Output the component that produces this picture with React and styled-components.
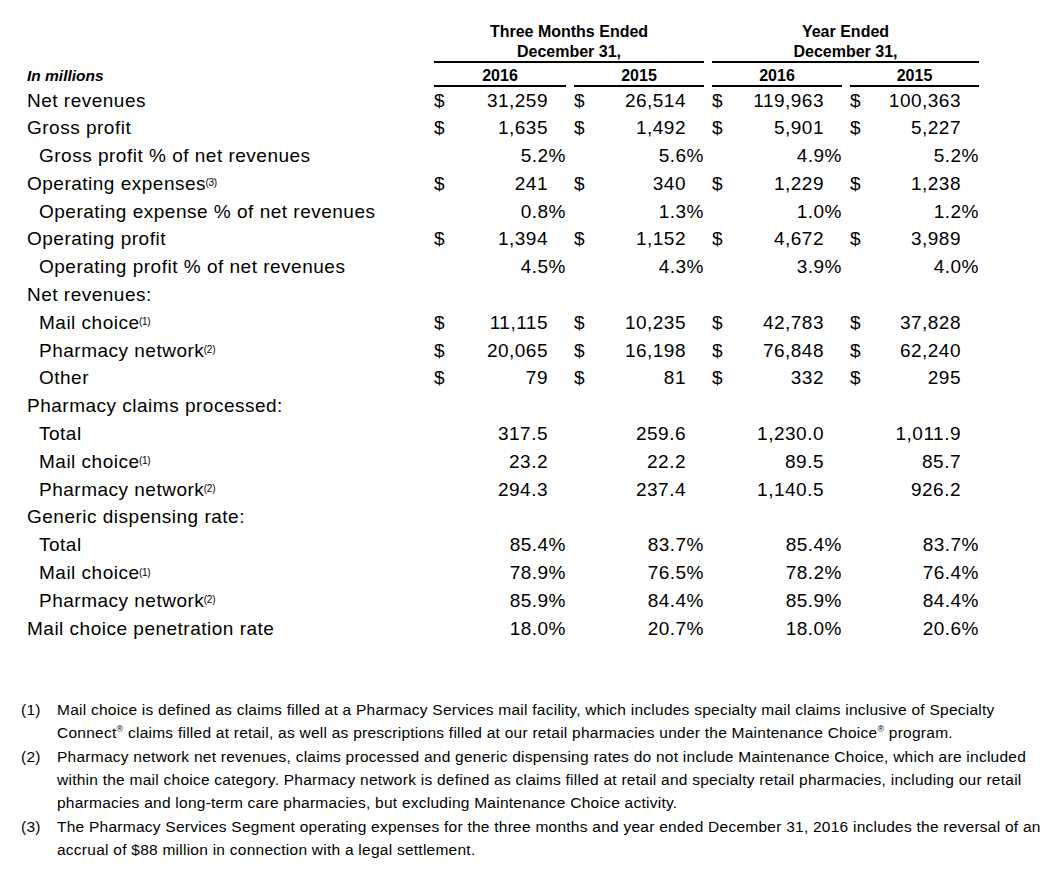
import React from 'react'
import styled, { createGlobalStyle } from 'styled-components'

const GlobalStyle = createGlobalStyle`
   body {
      margin: 0;
      background: #fff;
      color: #000;
      font-family: 'Liberation Sans', Arial, Helvetica, sans-serif;
   }
`

const rows = [
   { label: 'Net revenues', dollar: true, values: ['31,259', '26,514', '119,963', '100,363'] },
   { label: 'Gross profit', dollar: true, values: ['1,635', '1,492', '5,901', '5,227'] },
   { label: 'Gross profit % of net revenues', indent: true, pct: true, values: ['5.2%', '5.6%', '4.9%', '5.2%'] },
   { label: 'Operating expenses', note: '(3)', dollar: true, values: ['241', '340', '1,229', '1,238'] },
   { label: 'Operating expense % of net revenues', indent: true, pct: true, values: ['0.8%', '1.3%', '1.0%', '1.2%'] },
   { label: 'Operating profit', dollar: true, values: ['1,394', '1,152', '4,672', '3,989'] },
   { label: 'Operating profit % of net revenues', indent: true, pct: true, values: ['4.5%', '4.3%', '3.9%', '4.0%'] },
   { label: 'Net revenues:' },
   { label: 'Mail choice', note: '(1)', indent: true, dollar: true, values: ['11,115', '10,235', '42,783', '37,828'] },
   { label: 'Pharmacy network', note: '(2)', indent: true, dollar: true, values: ['20,065', '16,198', '76,848', '62,240'] },
   { label: 'Other', indent: true, dollar: true, values: ['79', '81', '332', '295'] },
   { label: 'Pharmacy claims processed:' },
   { label: 'Total', indent: true, values: ['317.5', '259.6', '1,230.0', '1,011.9'] },
   { label: 'Mail choice', note: '(1)', indent: true, values: ['23.2', '22.2', '89.5', '85.7'] },
   { label: 'Pharmacy network', note: '(2)', indent: true, values: ['294.3', '237.4', '1,140.5', '926.2'] },
   { label: 'Generic dispensing rate:' },
   { label: 'Total', indent: true, pct: true, values: ['85.4%', '83.7%', '85.4%', '83.7%'] },
   { label: 'Mail choice', note: '(1)', indent: true, pct: true, values: ['78.9%', '76.5%', '78.2%', '76.4%'] },
   { label: 'Pharmacy network', note: '(2)', indent: true, pct: true, values: ['85.9%', '84.4%', '85.9%', '84.4%'] },
   { label: 'Mail choice penetration rate', pct: true, values: ['18.0%', '20.7%', '18.0%', '20.6%'] },
]

const App = () => {
   return (
      <>
         <GlobalStyle />
         <Page>
            <Table>
               <GroupRow>
                  <span />
                  <GroupTitle>Three Months Ended<br />December 31,</GroupTitle>
                  <GroupTitle>Year Ended<br />December 31,</GroupTitle>
               </GroupRow>
               <YearRow>
                  <Caption>In millions</Caption>
                  {['2016', '2015', '2016', '2015'].map((year, index) => (
                     <YearCell key={index}>{year}</YearCell>
                  ))}
               </YearRow>
               {rows.map((row, index) => (
                  <DataRow key={index}>
                     <Label $indent={row.indent}>
                        {row.label}
                        {row.note && <Note>{row.note}</Note>}
                     </Label>
                     {row.values && row.values.map((value, i) => (
                        <Cell key={i}>
                           {row.dollar && <span>$</span>}
                           <Amount $pct={row.pct}>{value}</Amount>
                        </Cell>
                     ))}
                  </DataRow>
               ))}
            </Table>
            <Footnotes>
               <Footnote>
                  <Marker>(1)</Marker>
                  <FootText>
                     Mail choice is defined as claims filled at a Pharmacy Services mail facility, which includes specialty mail claims inclusive of Specialty<br />
                     Connect<Reg>®</Reg> claims filled at retail, as well as prescriptions filled at our retail pharmacies under the Maintenance Choice<Reg>®</Reg> program.
                  </FootText>
               </Footnote>
               <Footnote>
                  <Marker>(2)</Marker>
                  <FootText>
                     Pharmacy network net revenues, claims processed and generic dispensing rates do not include Maintenance Choice, which are included<br />
                     within the mail choice category. Pharmacy network is defined as claims filled at retail and specialty retail pharmacies, including our retail<br />
                     pharmacies and long-term care pharmacies, but excluding Maintenance Choice activity.
                  </FootText>
               </Footnote>
               <Footnote>
                  <Marker>(3)</Marker>
                  <FootText>
                     The Pharmacy Services Segment operating expenses for the three months and year ended December 31, 2016 includes the reversal of an<br />
                     accrual of $88 million in connection with a legal settlement.
                  </FootText>
               </Footnote>
            </Footnotes>
         </Page>
      </>
   )
}

const Page = styled.div`
   padding: 22px 0 20px;
`
const Table = styled.div`
   margin-left: 27px;
`
const RowGrid = styled.div`
   display: grid;
   grid-template-columns: 399px 132px 130px 130px 129px;
   column-gap: 8px;
`
const GroupRow = styled(RowGrid)`
   align-items: end;
`
const GroupTitle = styled.div`
   grid-column: span 2;
   text-align: center;
   font-size: 16px;
   font-weight: bold;
   line-height: 19.5px;
   border-bottom: 2px solid #000;
`
const YearRow = styled(RowGrid)``
const Caption = styled.div`
   font-size: 15.5px;
   font-weight: bold;
   font-style: italic;
   padding-top: 3.5px;
   line-height: 18px;
`
const YearCell = styled.div`
   text-align: center;
   font-size: 16px;
   font-weight: bold;
   padding-top: 3.5px;
   line-height: 18px;
   border-bottom: 2px solid #000;
`
const DataRow = styled(RowGrid)`
   height: 27.8px;
   line-height: 27.8px;
   font-size: 19px;
   letter-spacing: 0.5px;
   white-space: nowrap;
`
const Label = styled.div`
   padding-left: ${({ $indent }) => ($indent ? '12px' : '0')};
`
const Note = styled.span`
   font-size: 10px;
   letter-spacing: -0.3px;
   vertical-align: 3.5px;
   line-height: 0;
   margin-left: -0.5px;
`
const Cell = styled.div`
   display: flex;
   justify-content: space-between;
`
const Amount = styled.span`
   margin-left: auto;
   padding-right: ${({ $pct }) => ($pct ? '0' : '18px')};
`
const Footnotes = styled.div`
   margin-top: 57px;
   padding-left: 21px;
   display: flex;
   flex-direction: column;
   gap: 1.5px;
   font-size: 15.5px;
   letter-spacing: 0.25px;
   line-height: 22.7px;
`
const Footnote = styled.div`
   display: grid;
   grid-template-columns: 36px auto;
`
const Marker = styled.span``
const FootText = styled.p`
   margin: 0;
   white-space: nowrap;
`
const Reg = styled.sup`
   font-size: 9px;
   line-height: 0;
   vertical-align: 6px;
`

export default App
